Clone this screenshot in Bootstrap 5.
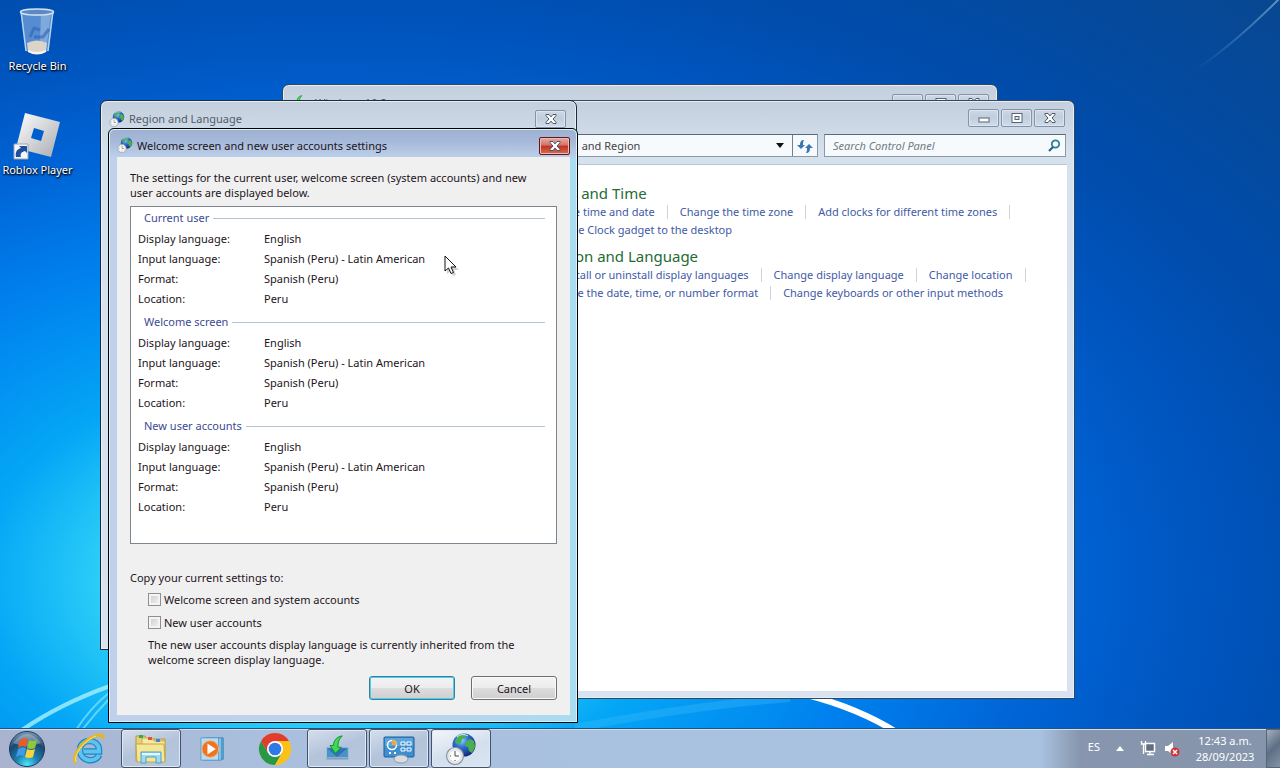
<!DOCTYPE html>
<html lang="en">
<head>
<meta charset="utf-8">
<meta name="viewport" content="width=device-width, initial-scale=1">
<title>Desktop</title>
<link href="https://cdn.jsdelivr.net/npm/bootstrap@5.3.0/dist/css/bootstrap.min.css" rel="stylesheet">
<script src="https://cdn.jsdelivr.net/npm/bootstrap@5.3.0/dist/js/bootstrap.bundle.min.js"></script>
<style>
body { font-family: "Noto Sans", "Open Sans", sans-serif; font-size: 11px; line-height: 15px; color: #1c1420; }
.desktop { background: radial-gradient(ellipse 1000px 620px at 330px 580px, #40d8fa 0, #2ed0f8 22%, #04a6f6 35%, #0080ee 55%, #0064d6 72%, #0057c2 85%, #004dae 100%, #08478f 135%); }
.wallpaper { inset: 0; width: 100%; height: 100%; }
.shortcuts { width: 75px; padding-top: 7px; gap: 36px; }
.shortcut { color: #fff; line-height: 18px; text-shadow: 1px 1px 2px #000, 0 1px 2px #002; }
.shortcut:hover { color: #fff; }
.shortcut svg { height: 50px; width: 50px; }

.win { position: absolute; display: flex; flex-direction: column; border: 1px solid #30485f; border-radius: 7px 7px 0 0; background: linear-gradient(#c3cfdc, #d6e1ee 50px, #d9e2ee 100%); box-shadow: inset 0 0 0 1px #e6eef6; }
.win-installer { left: 282px; top: 84px; width: 716px; height: 300px; }
.win-panel { left: 284px; top: 100px; width: 791px; height: 599px; padding: 8px 7px 7px; }
.win-region { left: 100px; top: 100px; width: 477px; height: 550px; padding: 8px; border-color: #1d2b3a; }
.win-dialog { left: 108px; top: 128px; width: 470px; height: 595px; padding: 8px 7px 7px 8px; border-color: #000; border-radius: 6px 6px 0 0; background: linear-gradient(90deg, #c0d0ec 0, #bfd1ec 60%, #a9dcf0 100%); box-shadow: inset 0 0 0 1px #d4f4fb; }
.win-dialog::before { content: ""; position: absolute; inset: 1px 1px auto; height: 28px; border-radius: 5px 5px 0 0; background: linear-gradient(#9fb1d0, #a6b9d8 40%, #bdd0eb); }
.caption { position: relative; height: 20px; line-height: 18px; }
.win-panel .caption, .win-region .caption { padding-right: 2px; }
.caption svg.glyph { width: 16px; height: 16px; }
.cap-set { gap: 2px; }
.dim { color: #515c68; }
.cap-btn { width: 31px; height: 18px; padding: 0; border: 1px solid #8593a5; border-radius: 2px; background: linear-gradient(#cfd9e4, #bfcddd 45%, #d0dcea); box-shadow: inset 0 0 0 1px #dbe5ef; display: flex; align-items: center; justify-content: center; }
.cap-close { border-color: #5c1a20; background: linear-gradient(#e7aba0, #d47366 45%, #bd3322 50%, #d86a50); box-shadow: inset 0 0 0 1px #eeb9ae; }

.tool-row { margin-top: 5px; height: 23px; gap: 6px; padding-right: 1px; }
.field { border: 1px solid #8a98a8; border-top-color: #5b6978; background: #f6fafd; height: 23px; flex-shrink: 0; }
.address { width: 460px; padding-left: 132px; color: #444; }
.address .go { width: 25px; border: 0; border-left: 1px solid #77818e; background: none; padding: 0; height: 21px; }
.search { width: 242px; }
.search input { border: 0; background: none; font-style: italic; color: #666; width: 210px; padding: 0 8px; outline: 0; }
.search input::placeholder { color: #737b84; }
.panel-body { background: #fff; margin-top: 7px; border-top: 1px solid #b9c7d5; padding: 19px 0 0 252px; }
.topic { font-size: 15px; line-height: 19px; color: #1f6b35; margin: 0; font-weight: 400; }
.tasks { line-height: 18px; height: 18px; white-space: nowrap; display: flex; align-items: center; }
.tasks a { color: #3f5aa6; text-decoration: none; }
.tasks span { width: 1px; height: 14px; background: #ccd2de; margin: 0 12px; }
.group-gap { margin-top: 8px; }

.dialog-body { position: relative; background: #f0f0f0; padding: 13px 13px 15px; }
.report { background: #fff; border: 1px solid #7f858f; height: 338px; margin-top: 6px; padding: 0 11px 0 7px; }
.report h2 { font-size: 11px; line-height: 22px; color: #3c4a94; font-weight: 400; margin: 0; padding-left: 6px; gap: 4px; }
.report h2::after { content: ""; flex: 1; height: 1px; background: #b3c4d2; }
.report table { width: 100%; margin-bottom: 2px; }
.report th { width: 126px; font-weight: 400; }
.report th, .report td { padding: 0; line-height: 20px; height: 20px; }
.copy-set { margin-top: 26px; padding-left: 18px; }
.copy-set legend { font-size: 11px; line-height: 16px; margin: 0 0 6px -18px; float: none; }
.tick { display: flex; align-items: center; height: 15px; gap: 3px; margin-bottom: 8px; }
.tick + .tick { margin-bottom: 7px; }
.tick input.form-check-input { width: 13px; height: 13px; margin: 0; border-radius: 0; border: 1px solid #8e8f8f; background: linear-gradient(135deg, #c6c9cc, #f6f6f6); box-shadow: inset 0 0 0 2px #f4f4f4; }
.dlg-btn { width: 86px; height: 24px; padding: 0; font-size: 11px; line-height: 15px; color: #1c1420; border: 1px solid #707070; border-radius: 3px; background: linear-gradient(#f4f4f4, #ececec 48%, #dddddd 50%, #cfcfcf); box-shadow: inset 0 0 0 1px #fafafa; }
.dlg-btn.default { border-color: #3c7f98; box-shadow: inset 0 0 0 1px #46d0ef; }
.pointer { left: 444px; top: 255px; width: 16px; height: 22px; }

.taskbar { position: relative; height: 40px; border-top: 1px solid #2d4f78; box-shadow: inset 0 1px 0 #bfe4f6; background: linear-gradient(90deg, #a9b3cf 0, #a9bfdd 260px, #a9c2df 600px, #a9c2df calc(100% - 240px), #8796ae calc(100% - 200px), #8695ab 100%); gap: 2px; }
.start { width: 57px; border: 0; background: none; padding: 0 4px 0 0; }
.task { width: 60px; height: 39px; padding: 0; border: 1px solid transparent; border-radius: 3px; background: none; display: flex; align-items: center; justify-content: center; }
.task.open { border-color: #43536b; background: linear-gradient(160deg, #d5dfec, #b3c3da 50%, #b6c9e0); box-shadow: inset 0 0 0 1px #dfe8f3; }
.task.active { background: linear-gradient(160deg, #f3f6fa, #d3dfee 55%, #d9e5f2); }
.tray { color: #fff; }
.clock { line-height: 16px; width: 82px; text-align: center; }
.peek { width: 14px; border: 1px solid #56657c; border-right: 0; padding: 0; background: linear-gradient(135deg, #a3afbf, #5e6e84 50%, #8492a6); height: 39px; }
</style>
</head>
<body>
<svg width="0" height="0" class="position-absolute">
  <defs>
    <radialGradient id="sea" cx=".4" cy=".3" r=".75"><stop offset="0" stop-color="#8fd0fa"/><stop offset=".4" stop-color="#2d6fd2"/><stop offset="1" stop-color="#0c2470"/></radialGradient>
    <symbol id="globe" viewBox="0 0 32 32">
      <circle cx="19" cy="12" r="11.5" fill="url(#sea)"/>
      <path d="M12 4c3-3 8-3 10-2l-2 3-3 1-1 4-4 1-2-2zM21 9l4-3 4 2 1 6-3 6-3-2-1-4-3-1zM10 14l4 1 1 4-2 1z" fill="#4caf4f"/>
      <path d="M12 4c3-3 8-3 11-1" stroke="#d8f3ff" fill="none"/>
      <circle cx="10" cy="23" r="8.5" fill="#e8ebee" stroke="#8c949d" stroke-width="1.2"/>
      <circle cx="10" cy="23" r="6.2" fill="#fbfbfb" stroke="#c5cad0" stroke-width=".6"/>
      <path d="M10 18v5h4M10 28v-1M5 23h1" stroke="#444c58" fill="none"/>
    </symbol>
    <symbol id="cross" viewBox="0 0 14 12">
      <path d="M2 1.5h3l2 2.400 2-2.400h3v1.200L9 6l3 3.300v1.200H9L7 8.100l-2 2.400H2V9.300L5 6 2 2.700z" fill="#fff" stroke="#4a5568"/>
    </symbol>
    <symbol id="mini" viewBox="0 0 14 12"><rect x="2" y="6" width="10" height="4" fill="#fff" stroke="#566478"/></symbol>
    <symbol id="maxi" viewBox="0 0 14 12"><rect x="2" y="1.500" width="10" height="9" fill="#fff" stroke="#566478"/><rect x="5" y="4.500" width="4" height="3" fill="#dce4ee" stroke="#566478"/></symbol>
    <symbol id="setup" viewBox="0 0 32 32">
      <path d="M4 14h25v12H4z" fill="#4c92c8" stroke="#9cc5e2"/><path d="M5 15h23L16 25z" fill="#2f74b0"/><path d="M4 26h25v2H4z" fill="#7d9fbd"/>
      <path d="M22 1c-7 1-10 6-10 11H8l6 9 7-7h-4c0-5 1-9 5-13z" fill="#3ddc50" stroke="#12852b"/>
    </symbol>
    <linearGradient id="beam" x1="0" y1="1" x2="1" y2="0"><stop stop-color="#7fb0d8" stop-opacity="0"/><stop offset="1" stop-color="#9cc6e4"/></linearGradient>
  </defs>
</svg>

<div class="desktop position-relative d-flex flex-column vh-100 overflow-hidden">
  <svg class="wallpaper position-absolute" viewBox="0 0 1280 768" preserveAspectRatio="none" fill="none">
    <path d="M22 730Q60 704 110 686" stroke="#a6f0ff" stroke-width="4" opacity=".8"/>
    <path d="M76 730Q90 708 110 692M82 730Q96 712 112 696" stroke="#7fe6fb" stroke-width="2" opacity=".7"/>
    <path d="M575 728Q690 706 790 698" stroke="#46c0fb" stroke-width="8" opacity=".3"/>
    <path d="M807 695Q858 708 898 733" stroke="#fff" stroke-width="6"/>
    <path d="M1195 70Q1232 46 1280 -2" stroke="url(#beam)" stroke-width="2" opacity=".6"/>
  </svg>

  <main class="flex-grow-1 position-relative">
    <nav class="shortcuts d-flex flex-column" aria-label="Desktop">
      <a href="#" class="shortcut d-flex flex-column align-items-center text-decoration-none text-nowrap">
        <svg viewBox="0 0 50 50">
          <path d="M8 4l5 40q12 6 22 0l5-40z" fill="#8fb6e2" opacity=".6"/>
          <path d="M8 4l5 40M40 4l-5 40" stroke="#b9d3ee" stroke-width="1.500"/>
          <path d="M28 6l-1 30h7l4-30z" fill="#dcebfa" opacity=".3"/>
          <path d="M14 36q10-5 20 0l-1 8q-9 4-18 0z" fill="#ddd3c6"/>
          <path d="M15 43q9 4 18 0v2q-9 5-18 0z" fill="#f6f6f6"/>
          <path d="M17 30l4-9 6 2M21 30l9 0 6-8" stroke="#2d62b4" stroke-width="3" fill="none" opacity=".6"/>
          <ellipse cx="24" cy="5" rx="16.500" ry="3" fill="#5d8ac4" stroke="#d3e2f2" stroke-width="1.500"/>
        </svg>Recycle Bin
      </a>
      <a href="#" class="shortcut d-flex flex-column align-items-center text-decoration-none text-nowrap">
        <svg viewBox="0 0 50 50">
          <defs><linearGradient id="tile" x2="1" y2="1"><stop stop-color="#fff"/><stop offset="1" stop-color="#a9abb0"/></linearGradient></defs>
          <path fill-rule="evenodd" d="M12 2l35 9-9 35-35-9zM21 17l-3 10 10 3 3-10z" fill="url(#tile)"/>
          <path d="M1 33h14v15H1z" fill="#f4f6f8" stroke="#9aa4b0"/>
          <path d="M3 46c-1-5 1-8 5-9l-2-2h8v7l-2-2c-4 1-5 3-4 6z" fill="#1c4f9c"/>
        </svg>Roblox Player
      </a>
    </nav>

    <section class="win win-installer" aria-label="Windows 10 S">
      <div class="caption dim d-flex align-items-center px-2 mt-2">
        <svg class="glyph me-2"><use href="#setup"/></svg>Windows 10 S
        <div class="cap-set d-flex ms-auto">
          <button class="cap-btn" aria-label="Minimize"><svg width="14" height="12"><use href="#mini"/></svg></button>
          <button class="cap-btn" aria-label="Maximize"><svg width="14" height="12"><use href="#maxi"/></svg></button>
          <button class="cap-btn" aria-label="Close"><svg width="14" height="12"><use href="#cross"/></svg></button>
        </div>
      </div>
    </section>

    <section class="win win-panel" aria-label="Clock, Language, and Region">
      <div class="caption cap-set d-flex justify-content-end">
        <button class="cap-btn" aria-label="Minimize"><svg width="14" height="12"><use href="#mini"/></svg></button>
        <button class="cap-btn" aria-label="Maximize"><svg width="14" height="12"><use href="#maxi"/></svg></button>
        <button class="cap-btn" aria-label="Close"><svg width="14" height="12"><use href="#cross"/></svg></button>
      </div>
      <div class="tool-row d-flex justify-content-end">
        <div class="field address d-flex align-items-center">
          <span>Clock, Language, and Region</span>
          <svg class="ms-auto me-2" width="8" height="5"><path d="M0 0h8L4 5z" fill="#111"/></svg>
          <button class="go" aria-label="Refresh"><svg width="16" height="16" viewBox="0 0 16 16"><path d="M7 2C4 2 3 4 3 7H0l4 4 4-4H6c0-2 0-3 1-5zM9 15c3 0 4-2 4-5h3l-4-4-4 4h2c0 2 0 3-1 5z" fill="#3a76b4"/></svg></button>
        </div>
        <div class="field search d-flex align-items-center justify-content-between pe-1">
          <input type="text" placeholder="Search Control Panel" aria-label="Search Control Panel">
          <svg width="14" height="14" fill="none"><circle cx="8.500" cy="5" r="3.700" stroke="#2d7f92" stroke-width="1.800"/><path d="M6 8L2 12" stroke="#2c5f80" stroke-width="2.200"/></svg>
        </div>
      </div>
      <div class="panel-body flex-grow-1">
        <h2 class="topic">Date and Time</h2>
        <div class="tasks"><a href="#">Set the time and date</a><span></span><a href="#">Change the time zone</a><span></span><a href="#">Add clocks for different time zones</a><span></span></div>
        <div class="tasks"><a href="#">Add the Clock gadget to the desktop</a></div>
        <h2 class="topic group-gap">Region and Language</h2>
        <div class="tasks"><svg width="16" height="16"><path d="M8 1l6 2c0 6-2 10-6 12C4 13 2 9 2 3z" fill="#3973c9"/></svg><a href="#">Install or uninstall display languages</a><span></span><a href="#">Change display language</a><span></span><a href="#">Change location</a><span></span></div>
        <div class="tasks"><a href="#">Change the date, time, or number format</a><span></span><a href="#">Change keyboards or other input methods</a></div>
      </div>
    </section>

    <section class="win win-region" aria-label="Region and Language">
      <div class="caption dim d-flex align-items-center">
        <svg class="glyph me-1"><use href="#globe"/></svg>Region and Language
        <button class="cap-btn ms-auto" aria-label="Close"><svg width="14" height="12"><use href="#cross"/></svg></button>
      </div>
    </section>

    <section class="win win-dialog" role="dialog" aria-label="Welcome screen and new user accounts settings">
      <div class="caption d-flex align-items-start">
        <svg class="glyph me-1"><use href="#globe"/></svg>Welcome screen and new user accounts settings
        <button class="cap-btn cap-close ms-auto" aria-label="Close"><svg width="14" height="12"><use href="#cross"/></svg></button>
      </div>
      <div class="dialog-body flex-grow-1 d-flex flex-column">
        <div>The settings for the current user, welcome screen (system accounts) and new<br>user accounts are displayed below.</div>
        <div class="report">
          <h2 class="d-flex align-items-center">Current user</h2>
          <table>
            <tr><th>Display language:</th><td>English</td></tr>
            <tr><th>Input language:</th><td>Spanish (Peru) - Latin American</td></tr>
            <tr><th>Format:</th><td>Spanish (Peru)</td></tr>
            <tr><th>Location:</th><td>Peru</td></tr>
          </table>
          <h2 class="d-flex align-items-center">Welcome screen</h2>
          <table>
            <tr><th>Display language:</th><td>English</td></tr>
            <tr><th>Input language:</th><td>Spanish (Peru) - Latin American</td></tr>
            <tr><th>Format:</th><td>Spanish (Peru)</td></tr>
            <tr><th>Location:</th><td>Peru</td></tr>
          </table>
          <h2 class="d-flex align-items-center">New user accounts</h2>
          <table>
            <tr><th>Display language:</th><td>English</td></tr>
            <tr><th>Input language:</th><td>Spanish (Peru) - Latin American</td></tr>
            <tr><th>Format:</th><td>Spanish (Peru)</td></tr>
            <tr><th>Location:</th><td>Peru</td></tr>
          </table>
        </div>
        <fieldset class="copy-set">
          <legend>Copy your current settings to:</legend>
          <div class="tick"><input class="form-check-input" type="checkbox" id="c1"><label for="c1">Welcome screen and system accounts</label></div>
          <div class="tick"><input class="form-check-input" type="checkbox" id="c2"><label for="c2">New user accounts</label></div>
          <div>The new user accounts display language is currently inherited from the<br>welcome screen display language.</div>
        </fieldset>
        <div class="d-flex justify-content-end gap-3 mt-auto">
          <button class="dlg-btn default">OK</button>
          <button class="dlg-btn">Cancel</button>
        </div>
      </div>
    </section>

    <svg class="pointer position-absolute" viewBox="0 0 16 22"><path d="M3 3v16l4-3 2 5 3-1-2-5h5z" fill="#000" opacity=".18"/><path d="M1 1v15l3.500-3 2.500 5.500 2.500-1L7 12h5z" fill="#fff" stroke="#111"/></svg>
  </main>

  <footer class="taskbar d-flex">
    <button class="start" aria-label="Start">
      <svg width="38" height="38" viewBox="0 0 38 38">
        <defs><radialGradient id="orb" cx=".5" cy=".95" r=".95"><stop offset="0" stop-color="#4ee6fb"/><stop offset=".35" stop-color="#1a7fae"/><stop offset=".7" stop-color="#1d4670"/><stop offset="1" stop-color="#7d9ebc"/></radialGradient></defs>
        <circle cx="19" cy="19" r="17.500" fill="url(#orb)" stroke="#1d3a5a"/>
        <path d="M5 13Q19-5 33 13 19 19 5 13z" fill="#fff" opacity=".3"/>
        <path d="M12 10q4-3 8-1l-2 8q-4-2-8 1z" fill="#ee5a24"/><path d="M21 10q4 2 8 0l-2 8q-4 2-8 0z" fill="#8fc93a"/>
        <path d="M10 19q4-3 8-1l-2 8q-4-2-8 1z" fill="#3d9be9"/><path d="M19 19q4 2 8 0l-2 8q-4 2-8 0z" fill="#fdd23a"/>
      </svg>
    </button>
    <button class="task" aria-label="Internet Explorer">
      <svg width="32" height="34" viewBox="0 0 32 34" fill="none">
        <path d="M26 23c-3 8-19 7-19-5 0-12 19-12 19 0v1.500H11" stroke="#1e87c8" stroke-width="6.500"/>
        <path d="M26 23c-3 8-19 7-19-5 0-12 19-12 19 0v1.500H11" stroke="#5cc4ee" stroke-width="4"/>
        <path d="M3 31C-2 26 8 9 22 4c6-2 9-1 8 3" stroke="#e8b51c" stroke-width="3"/><path d="M3 30C0 24 10 9 23 4" stroke="#ffe66b"/>
      </svg>
    </button>
    <button class="task open" aria-label="Windows Explorer">
      <svg width="34" height="32" viewBox="0 0 34 32">
        <path d="M2 3h9l2 3h18v22H2z" fill="#e6cf76" stroke="#b79a3d"/><path d="M8 5h10l2 3h11v5H8z" fill="#f5e9a8" stroke="#c9ae52"/>
        <path d="M5 2h4v3H5z" fill="#3aa845"/><path d="M14 4h4v3h-4z" fill="#e2542b"/><path d="M22 6h4v3h-4z" fill="#4286d9"/>
        <path d="M2 11h28l1 18H3z" fill="#f6e795" stroke="#c5a64a"/>
        <path d="M7 19h20v11h-5v-6H12v6H7z" fill="#9fdaf3" stroke="#4c9fc9"/><path d="M8 20h18v2H8z" fill="#e6f8ff"/>
      </svg>
    </button>
    <button class="task" aria-label="Windows Media Player">
      <svg width="28" height="26" viewBox="0 0 30 28">
        <path d="M8 2h18v23H8z" fill="#5fa9d9" stroke="#3d85b8"/><path d="M5 2h19v24H5z" fill="#8cc7ea" stroke="#4a93c4"/><path d="M2 2h19v24H2z" fill="#b9dcf2" stroke="#5a9dcb"/>
        <circle cx="12" cy="14" r="9" fill="#ee7424" stroke="#f9b27c"/><path d="M9 8l9 6-9 6z" fill="#fff"/>
      </svg>
    </button>
    <button class="task" aria-label="Google Chrome">
      <svg width="34" height="34" viewBox="0 0 34 34">
        <circle cx="17" cy="17" r="16" fill="#fbc116"/>
        <path d="M3.140 9A16 16 0 0 1 30.860 9H17L10 21z" fill="#e33b2e"/>
        <path d="M3.140 9A16 16 0 0 0 17 33l7-12H10z" fill="#279847"/>
        <path d="M17 9h13.860A16 16 0 0 1 17 33l7-12z" fill="#fbc116"/>
        <circle cx="17" cy="17" r="8" fill="#fff"/><circle cx="17" cy="17" r="6.300" fill="#2f78e8"/>
      </svg>
    </button>
    <button class="task open" aria-label="Setup"><svg width="28" height="28"><use href="#setup"/></svg></button>
    <button class="task open" aria-label="Control Panel">
      <svg width="34" height="30" viewBox="0 0 34 30">
        <rect x="2" y="3" width="30" height="20" rx="1" fill="#3f8fcf" stroke="#1f5f9c"/><path d="M3 4h28v8H3z" fill="#7cbce8" opacity=".5"/>
        <circle cx="10" cy="11" r="4.500" fill="none" stroke="#fff" stroke-width="1.500"/><path d="M10 11V6a5 5 0 0 1 5 5z" fill="#f6a534"/>
        <path d="M19 8h4v3h-4zM25 8h4v3h-4zM19 14h4v3h-4zM25 14h4v3h-4z" fill="#3f8fcf" stroke="#fff"/><path d="M7 19h2M12 19h2" stroke="#fff" stroke-width="2"/>
        <ellipse cx="19" cy="25" rx="7" ry="4" fill="#d9dde2" stroke="#8e98a4"/>
      </svg>
    </button>
    <button class="task open active" aria-label="Region and Language"><svg width="32" height="32"><use href="#globe"/></svg></button>

    <div class="tray d-flex align-items-center ms-auto">
      <span class="me-3 pb-1">ES</span>
      <svg class="me-3" width="8" height="5"><path d="M4 0l4 5H0z" fill="#fff"/></svg>
      <svg class="me-2" width="16" height="17" fill="none"><path d="M5.500 3.500h9v8h-9z" fill="#5f6d80" stroke="#fff" stroke-width="1.500"/><path d="M1.500 1v3h4V1M3.500 4v10M7 14.500h7M10 12v2" stroke="#fff" stroke-width="1.300"/></svg>
      <svg width="16" height="16"><path d="M1 5h3l5-4v13l-5-4H1z" fill="#fff"/><circle cx="11" cy="11" r="4.500" fill="#d5313a"/><path d="M9 9l4 4m0-4l-4 4" stroke="#fff" stroke-width="1.500"/></svg>
      <time class="clock ms-1">12:43 a.m.<br>28/09/2023</time>
      <button class="peek" aria-label="Show desktop"></button>
    </div>
  </footer>
</div>
</body>
</html>
